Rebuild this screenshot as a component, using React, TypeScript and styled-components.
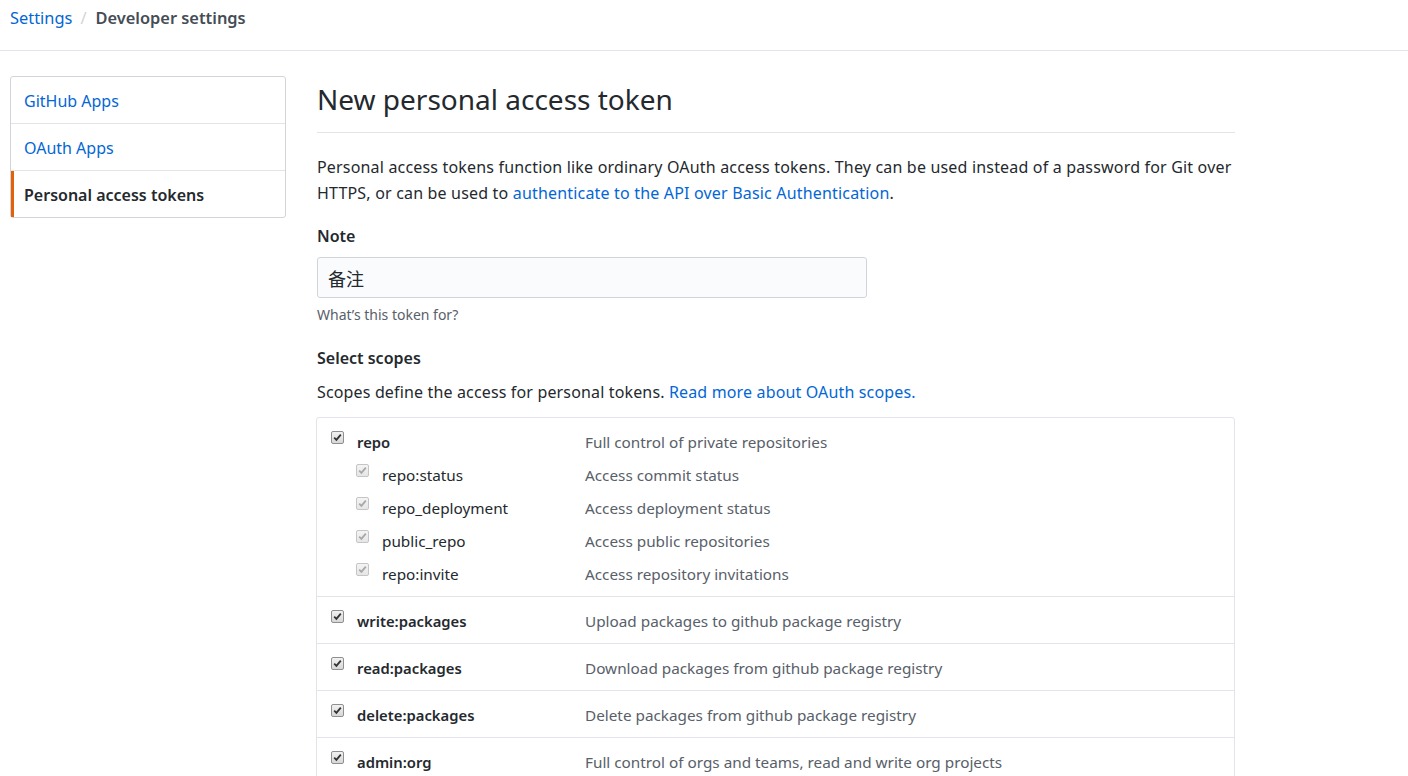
import React from "react";
import styled, { createGlobalStyle } from "styled-components";

const Global = createGlobalStyle`
  html, body { margin: 0; padding: 0; background: #fff; }
  body {
    font-family: "Segoe UI", "Noto Sans", "Noto Sans CJK SC", sans-serif;
    color: #24292e;
    font-size: 16px;
  }
  * { box-sizing: border-box; }
`;

const Header = styled.header`
  height: 51px;
  border-bottom: 1px solid #e1e4e8;
  display: flex;
  align-items: flex-start;
  padding: 6px 10px 0;
  font-size: 16.4px;
`;

const Crumb = styled.a`
  color: #0366d6;
  text-decoration: none;
`;

const Sep = styled.span`
  color: #d1d5da;
  margin: 0 9px 0 8px;
`;

const CrumbCurrent = styled.span`
  font-weight: 600;
  color: #444d56;
`;

const Layout = styled.div`
  display: flex;
  align-items: flex-start;
  padding: 25px 10px 0;
  gap: 31px;
`;

const Menu = styled.nav`
  width: 276px;
  border: 1px solid #d1d5da;
  border-radius: 3px;
  flex: none;
`;

const MenuItem = styled.a<{ $active?: boolean }>`
  display: flex;
  align-items: center;
  height: ${(p) => (p.$active ? 46 : 47)}px;
  padding-left: ${(p) => (p.$active ? 10 : 13)}px;
  padding-top: 2px;
  border-bottom: 1px solid #e1e4e8;
  border-left: ${(p) => (p.$active ? "3px solid #e36209" : "none")};
  color: ${(p) => (p.$active ? "#24292e" : "#0366d6")};
  font-weight: ${(p) => (p.$active ? 600 : 400)};
  text-decoration: none;
  &:last-child { border-bottom: none; }
`;

const Main = styled.main`
  width: 918px;
  flex: none;
`;

const Title = styled.h1`
  margin: 0;
  font-size: 28px;
  font-weight: 400;
  line-height: 46px;
  padding-bottom: 10px;
  border-bottom: 1px solid #e1e4e8;
`;

const Lead = styled.p`
  margin: 21px 0 0;
  line-height: 26px;
  letter-spacing: 0.18px;
`;

const Link = styled.a`
  color: #0366d6;
  text-decoration: none;
`;

const Label = styled.div`
  margin-top: 18px;
  font-weight: 600;
  line-height: 24px;
`;

const Input = styled.div`
  margin-top: 9px;
  width: 550px;
  height: 41px;
  background: #fafbfc;
  border: 1px solid #d1d5da;
  border-radius: 3px;
  display: flex;
  align-items: center;
  padding: 0 10px;
  font-size: 18px;
  color: #24292e;
`;

const Hint = styled.div`
  margin-top: 7px;
  font-size: 14px;
  color: #586069;
  line-height: 20px;
`;

const SectionTitle = styled.div`
  margin-top: 21px;
  font-weight: 600;
  line-height: 24px;
`;

const SectionText = styled.p`
  margin: 9px 0 0;
  line-height: 26px;
  letter-spacing: 0.15px;
`;

const ScopeBox = styled.div`
  margin-top: 12px;
  border: 1px solid #e1e4e8;
  border-radius: 3px;
  width: 919px;
  margin-left: -1px;
`;

const ScopeGroup = styled.div`
  border-bottom: 1px solid #e1e4e8;
  padding: 7px 0 6px;
  &:last-child { border-bottom: none; }
`;

const ScopeRow = styled.div`
  display: grid;
  grid-template-columns: 268px 1fr;
  height: 33px;
  align-items: center;
`;

const ScopeName = styled.label<{ $child?: boolean }>`
  display: flex;
  align-items: center;
  padding-left: ${(p) => (p.$child ? 39 : 14)}px;
  gap: 13px;
  font-weight: ${(p) => (p.$child ? 400 : 600)};
  font-size: ${(p) => (p.$child ? 15.3 : 14.8)}px;
  color: #24292e;
`;

const ScopeDesc = styled.span`
  color: #586069;
  font-size: 15.3px;
`;

const Box = styled.span<{ $disabled?: boolean }>`
  width: 13px;
  height: 13px;
  border: 1px solid ${(p) => (p.$disabled ? "#c5c5c5" : "#8f8f8f")};
  border-radius: 2px;
  background: ${(p) =>
    p.$disabled
      ? "linear-gradient(#f4f4f4, #e6e6e6)"
      : "linear-gradient(#f2f2f2, #d7d7d7)"};
  display: inline-flex;
  align-items: center;
  justify-content: center;
  margin-top: -8px;
  flex: none;
`;

const Check = ({ disabled }: { disabled?: boolean }) => (
  <Box $disabled={disabled}>
    <svg width="9" height="9" viewBox="0 0 9 9">
      <path
        d="M1.2 4.6 L3.4 6.8 L7.8 1.6"
        fill="none"
        stroke={disabled ? "#a8a8a8" : "#333"}
        strokeWidth="1.8"
      />
    </svg>
  </Box>
);

type Scope = { name: string; desc: string; children?: { name: string; desc: string }[] };

const scopes: Scope[] = [
  {
    name: "repo",
    desc: "Full control of private repositories",
    children: [
      { name: "repo:status", desc: "Access commit status" },
      { name: "repo_deployment", desc: "Access deployment status" },
      { name: "public_repo", desc: "Access public repositories" },
      { name: "repo:invite", desc: "Access repository invitations" },
    ],
  },
  { name: "write:packages", desc: "Upload packages to github package registry" },
  { name: "read:packages", desc: "Download packages from github package registry" },
  { name: "delete:packages", desc: "Delete packages from github package registry" },
  { name: "admin:org", desc: "Full control of orgs and teams, read and write org projects" },
];

export default function App() {
  return (
    <>
      <Global />
      <Header>
        <Crumb href="#">Settings</Crumb>
        <Sep>/</Sep>
        <CrumbCurrent>Developer settings</CrumbCurrent>
      </Header>
      <Layout>
        <Menu>
          <MenuItem href="#">GitHub Apps</MenuItem>
          <MenuItem href="#">OAuth Apps</MenuItem>
          <MenuItem href="#" $active>
            Personal access tokens
          </MenuItem>
        </Menu>
        <Main>
          <Title>New personal access token</Title>
          <Lead>
            Personal access tokens function like ordinary OAuth access tokens. They can be used
            instead of a password for Git over HTTPS, or can be used to{" "}
            <Link href="#">authenticate to the API over Basic Authentication</Link>.
          </Lead>
          <Label>Note</Label>
          <Input>备注</Input>
          <Hint>What’s this token for?</Hint>
          <SectionTitle>Select scopes</SectionTitle>
          <SectionText>
            Scopes define the access for personal tokens.{" "}
            <Link href="#">Read more about OAuth scopes.</Link>
          </SectionText>
          <ScopeBox>
            {scopes.map((s) => (
              <ScopeGroup key={s.name}>
                <ScopeRow>
                  <ScopeName>
                    <Check />
                    {s.name}
                  </ScopeName>
                  <ScopeDesc>{s.desc}</ScopeDesc>
                </ScopeRow>
                {s.children?.map((c) => (
                  <ScopeRow key={c.name}>
                    <ScopeName $child>
                      <Check disabled />
                      {c.name}
                    </ScopeName>
                    <ScopeDesc>{c.desc}</ScopeDesc>
                  </ScopeRow>
                ))}
              </ScopeGroup>
            ))}
          </ScopeBox>
        </Main>
      </Layout>
    </>
  );
}
